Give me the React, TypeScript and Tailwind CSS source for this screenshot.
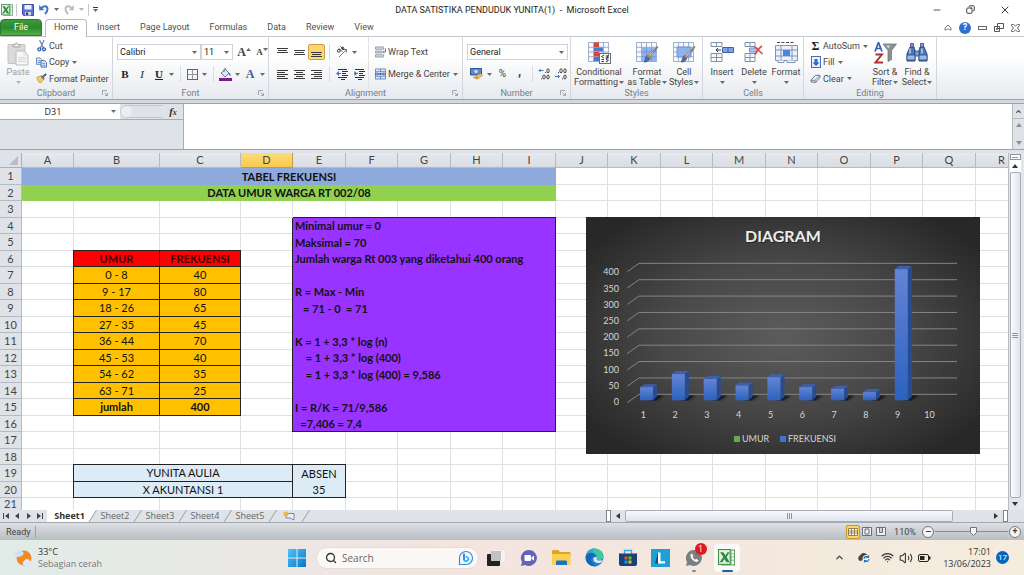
import React from "react";
import { ChevronUp, Search, Wifi, Volume2, X, Minus, Copy } from "lucide-react";

type P = { children?: React.ReactNode };

const cx = (...c: (string | false | undefined)[]) => c.filter(Boolean).join(" ");

/* ---------- small shared pieces ---------- */

const Caret = ({ dim }: { dim?: boolean }) => (
  <svg width="5" height="3" viewBox="0 0 5 3" className={cx("shrink-0", dim ? "text-[#b5b5b5]" : "text-[#6a6a6a]")}>
    <path d="M0 0h5L2.5 3z" fill="currentColor" />
  </svg>
);

const CaretSlot = ({ label, dim }: { label: string; dim?: boolean }) => (
  <button aria-label={label} className="flex h-4 w-[9px] items-center justify-center">
    <Caret dim={dim} />
  </button>
);

const Sep = () => (
  <span className="flex h-4 w-2 justify-center">
    <span className="w-px bg-[#d9dce0]" />
  </span>
);

const Launcher = () => (
  <svg width="6" height="6" viewBox="0 0 6 6" fill="none" stroke="#a0a6ae">
    <path d="M.5 5V.5H5M2.500 2.500l3 3M5.500 3v2.500H3" />
  </svg>
);

function Group({ name, width, launcher, children }: P & { name: string; width: string; launcher?: boolean }) {
  return (
    <section
      aria-label={name}
      className={cx("flex shrink-0 flex-col border-r border-[#d3d6db]", width)}
    >
      <div className="flex h-[51px]">{children}</div>
      <div className="flex h-3 items-center px-1">
        <span className="w-1.5" />
        <span className="flex-1 text-center text-[#777d88]">{name}</span>
        <span className="w-1.5">{launcher && <Launcher />}</span>
      </div>
    </section>
  );
}

function RowButton({ icon, label, caret }: { icon: React.ReactNode; label: string; caret?: boolean }) {
  return (
    <button className="flex items-center gap-[2px] whitespace-nowrap">
      <span className="flex w-[11px] justify-center">{icon}</span>
      {label}
      {caret && <span className="pl-px"><Caret /></span>}
    </button>
  );
}

function BigButton({ icon, lines, width, dim }: { icon: React.ReactNode; lines: string[]; width: string; dim?: boolean }) {
  const last = lines.length - 1;
  return (
    <button className={cx("flex flex-col items-center pt-[5px]", width, dim && "text-[#9d9d9d]")}>
      <span className="flex h-[25px] items-start justify-center">{icon}</span>
      <span className="h-[10px] whitespace-nowrap leading-[10px]">{lines[0]}</span>
      <span className="flex h-[10px] items-center gap-px whitespace-nowrap leading-[10px]">
        {last > 0 && lines[last]}
        <Caret dim={dim} />
      </span>
    </button>
  );
}

/* ---------- ribbon icons ---------- */

const ExcelIcon = ({ size }: { size: number }) => (
  <svg width={size} height={size} viewBox="0 0 16 16">
    <rect x="3.5" y="1" width="12" height="14" fill="#fff" stroke="#5d9a5f" />
    <path d="M10 4.500h5M10 7.500h5M10 10.500h5M12.500 1v14" stroke="#8dbd8c" />
    <rect x=".5" y=".5" width="11" height="14" fill="#dff0dc" stroke="#3f8f45" />
    <path d="M2 3h3l2 3 2-3h2L8 7.500l3 5H8L6 9.500 4 12.500H1.500L5 7.500z" fill="#2f8a43" />
  </svg>
);

const SaveIcon = () => (
  <svg width="12" height="12" viewBox="0 0 12 12">
    <path d="M.5.5h11v11h-10l-1-1z" fill="#5f72cc" stroke="#3f4fa0" />
    <path d="M2.500 1h7v4.500h-7z" fill="#e8eefb" />
    <path d="M3 8h6v3.500H3z" fill="#c9d3ee" />
    <path d="M4 8.500h2v2.500H4z" fill="#26357c" />
  </svg>
);

const UndoIcon = ({ flip }: { flip?: boolean }) => (
  <svg width="12" height="11" viewBox="0 0 12 11" fill="none" className={flip ? "-scale-x-100" : ""}>
    <path d="M3 4.500C5 1.500 9.500 1.500 9.500 5c0 2-1 3.500-2.500 5" stroke={flip ? "#b9bcc0" : "#3f77c8"} strokeWidth="2" />
    <path d="M1 1l.3 5.500L6.500 6z" fill={flip ? "#b9bcc0" : "#3f77c8"} />
  </svg>
);

const PasteIcon = () => (
  <svg width="22" height="24" viewBox="0 0 22 24">
    <rect x="1" y="2.500" width="17" height="19" rx="1" fill="#dadadc" stroke="#c2c2c4" />
    <path d="M6 5V2.500h2C8 .5 11 .5 11 2.500h2V5z" fill="#e6e6e8" stroke="#a5a5a8" />
    <path d="M9 9h8l4 4v10H9z" fill="#f6f6f8" stroke="#bcbcc0" />
    <path d="M17 9v4h4M11 15.500h8M11 17.500h8M11 19.500h8" fill="none" stroke="#d8d8dc" />
  </svg>
);

const CutIcon = () => (
  <svg width="10" height="12" viewBox="0 0 10 12" fill="none">
    <path d="M2.500 0l4 8M7 0L3.500 8" stroke="#6d87b5" strokeWidth="1.300" />
    <circle cx="2.300" cy="9.300" r="1.500" stroke="#2b5fb0" strokeWidth="1.300" />
    <circle cx="7" cy="9.300" r="1.500" stroke="#2b5fb0" strokeWidth="1.300" />
  </svg>
);

const CopyIcon = () => (
  <svg width="12" height="11" viewBox="0 0 12 11">
    <path d="M.5.5h4l2 2v5h-6z" fill="#dfeafa" stroke="#5b80b8" />
    <path d="M5.500 3.500h4l2 2v5h-6z" fill="#dfeafa" stroke="#3f68a8" />
    <path d="M2 3.500h3M2 5.500h3M7 6.500h3M7 8.500h3" stroke="#5b87c8" />
  </svg>
);

const PainterIcon = () => (
  <svg width="12" height="11" viewBox="0 0 12 11">
    <path d="M1 4l4-1 3 4-3 3.500C3 10 1 7 1 4z" fill="#f3cd6b" stroke="#b98d2c" strokeWidth=".7" />
    <path d="M5 2.500l3.500 4.500 1-1.500L6.500 2z" fill="#5d6470" />
    <path d="M8 3.500L11 .5" stroke="#3a4a78" strokeWidth="1.800" />
  </svg>
);

const Lines = ({ rows }: { rows: [number, number, number][] }) => (
  <svg width="11" height="11" viewBox="0 0 11 11" stroke="#3a3a3a">
    {rows.map(([x1, x2, y], i) => (
      <path key={i} d={`M${x1} ${y}.5H${x2}`} />
    ))}
  </svg>
);

const IndentIcon = ({ out }: { out?: boolean }) => (
  <svg width="12" height="11" viewBox="0 0 12 11">
    <path d="M2 .5h9M6 2.500h6M6 4.500h4M6 6.500h6M2 8.500h9M5 10.500h4" stroke="#333" />
    <path d={out ? "M0 4.500l3-2.500v5z" : "M4.500 4.500l-3-2.500v5z"} fill="#3c76c9" />
    <path d="M1 4.500h4" stroke="#3c76c9" />
  </svg>
);

const OrientationIcon = () => (
  <svg width="12" height="12" viewBox="0 0 12 12" fill="none" stroke="#333">
    <path d="M3 11L10.500 3.500M10.500 6.500v-3h-3" stroke="#777" />
    <circle cx="2.800" cy="4.800" r="1.400" />
    <path d="M3 2.500l3 3M4.500.5l3.500 3.500" />
    <circle cx="6.800" cy="2.300" r="1.100" />
  </svg>
);

const BordersIcon = () => (
  <svg width="11" height="11" viewBox="0 0 11 11" fill="none">
    <rect x=".5" y=".5" width="10" height="10" stroke="#666" />
    <path d="M5.500 1v9M1 5.500h9" stroke="#999" />
  </svg>
);

const BucketIcon = () => (
  <svg width="13" height="13" viewBox="0 0 13 13">
    <path d="M2 5l4.500-3.500L10 5 6 9z" fill="#dfe7f4" stroke="#56688c" strokeWidth=".9" />
    <path d="M5 4V1.500c0-1.500 2-1.500 2 0" fill="none" stroke="#56688c" strokeWidth=".8" />
    <path d="M10 4.500c1.500.5 2 2.500 1.300 4L9.500 6z" fill="#4b7ac6" />
    <path d="M0 10h13v3H0z" fill="#7a1a8c" />
  </svg>
);

const WrapIcon = () => (
  <svg width="12" height="12" viewBox="0 0 12 12">
    <path d="M.5.5h9v2.500h-9zM.5 5h7v2h-7zM.5 9h9v2.500h-9z" fill="#d6dde6" stroke="#7d8794" strokeWidth=".8" />
    <path d="M11.500 2v4H9M10 4.500L8.500 6 10 7.500" fill="none" stroke="#4672b8" />
  </svg>
);

const MergeIcon = () => (
  <svg width="12" height="12" viewBox="0 0 12 12">
    <path d="M.5.5h11v11H.5zM.5 3.500h11M.5 8.500h11M6 .5v3M6 8.500v3" fill="#dbe8f9" stroke="#587cae" strokeWidth=".9" />
    <path d="M0 6h3.500M8.500 6H12M2.500 4.500L4 6 2.500 7.500M9.500 4.500L8 6l1.500 1.500" fill="none" stroke="#1d4f9c" />
    <path d="M5 5h2v2H5z" fill="#243a60" />
  </svg>
);

const MoneyIcon = () => (
  <svg width="13" height="12" viewBox="0 0 13 12">
    <path d="M.5.5h11v6.500H.5z" fill="#5f86cf" stroke="#2f5399" />
    <circle cx="6" cy="3.500" r="1.700" fill="#cfdcf4" />
    <path d="M6 7.500l5-2 1.500 2-5 3.500zM3 9.500l4-1v2.500z" fill="#edc45a" stroke="#a9842b" strokeWidth=".6" />
  </svg>
);

const DecimalIcon = ({ less }: { less?: boolean }) => (
  <svg width="13" height="12" viewBox="0 0 13 12" fill="none" strokeWidth=".9">
    <g stroke="#333">
      <ellipse cx={less ? 6 : 10} cy="2.800" rx="1.200" ry="2" />
      <ellipse cx={less ? 10 : 6} cy={less ? 2.800 : 9} rx="1.200" ry="2" />
      <ellipse cx="10" cy="9" rx="1.200" ry="2" />
    </g>
    <path d={less ? "M3 4.500h1M7 10.800h1" : "M7 4.500h1M3 10.800h1"} stroke="#333" />
    <path d={less ? "M0 8.500h4.500M3 7l1.500 1.500L3 10" : "M5.500 2.500H1M2.500 1L1 2.500 2.500 4"} stroke="#2f68bd" />
  </svg>
);

const gridPath = "M.5.5h20v19H.5zM.5 5.300h20M.5 10h20M.5 14.700h20M5.500.5v19M10.500.5v19M15.500.5v19";

const Brush = () => (
  <>
    <path d="M21.500 5l-7 9.500-2-1.500z" fill="#c9ccd2" stroke="#6c7079" strokeWidth=".7" />
    <path d="M21.800 4.500l-3.800 5.300" stroke="#8a7a6a" strokeWidth="1.600" />
    <path d="M14.300 14.500c-.5 4-3.500 6-6.300 5.500 1.500-1.500.7-4.500 3.500-6.800z" fill="#4a6ca8" stroke="#2a4f8d" strokeWidth=".6" />
    <path d="M11.500 13.500l3 1.500" stroke="#d08b4a" strokeWidth="2" />
  </>
);

const ConditionalIcon = () => (
  <svg width="23" height="22" viewBox="0 0 23 22">
    <path d={gridPath} fill="#f6f9fe" stroke="#8b9dbd" strokeWidth=".8" />
    <path d="M6 .5h5V5H6zM6 10h5v4.500H6z" fill="#d8423a" />
    <path d="M6 5.500h9v4H6zM6 15h5v4H6z" fill="#4d79cc" />
    <rect x="11.500" y="11.500" width="11" height="10" fill="#fff" stroke="#6a6f78" />
    <path d="M16 13l-2.500 1.500L16 16M13.500 17.500H16M13.500 19.500H16M17.500 14h3.500M17.500 16H21M20.500 12.500l-2 5M18 17.500l2.500 1-2.500 1.500" fill="none" stroke="#222" strokeWidth=".9" />
  </svg>
);

const FormatTableIcon = () => (
  <svg width="23" height="22" viewBox="0 0 23 22">
    <path d={gridPath} fill="#f6f9fe" stroke="#8b9dbd" strokeWidth=".8" />
    <path d="M5.500 5.300h15v14.200h-15z" fill="#8fb2ea" />
    <path d="M5.500 10h15M5.500 14.700h15M10.500 5.300v14.200M15.500 5.300v14.200" stroke="#6d93d4" strokeWidth=".8" />
    <Brush />
  </svg>
);

const CellStylesIcon = () => (
  <svg width="23" height="22" viewBox="0 0 23 22">
    <path d={gridPath} fill="#f6f9fe" stroke="#8b9dbd" strokeWidth=".8" />
    <path d="M4 5h14v10H4z" fill="#8fb2ea" stroke="#6d93d4" />
    <Brush />
  </svg>
);

const InsertIcon = () => (
  <svg width="24" height="22" viewBox="0 0 24 22">
    <path d="M1 .5h11v4H1zM6.500.5v4M1 11.500h11v8H1zM6.500 11.500v8M1 15.500h11" fill="#f8fafd" stroke="#8390a8" />
    <path d="M12.500 5.500h11v5h-11zM18 5.500v5" fill="#7fa3e2" stroke="#3f63a9" />
    <path d="M11 8H6M8 6L6 8l2 2" fill="none" stroke="#333" />
  </svg>
);

const DeleteIcon = () => (
  <svg width="22" height="22" viewBox="0 0 22 22">
    <path d="M2 .5h10v4H2zM7 .5v4M2 11.500h10v8H2zM7 11.500v8M2 15.500h10" fill="#f8fafd" stroke="#8390a8" />
    <path d="M6.500 6h8v4h-8z" fill="#a9c2ee" stroke="#6d8fcc" />
    <path d="M11.500 4.500l8 7.500M19 4c-3 2-5 5-7 8.500" fill="none" stroke="#e0483a" strokeWidth="1.700" />
  </svg>
);

const FormatIcon = () => (
  <svg width="23" height="22" viewBox="0 0 23 22">
    <path d="M2 .5h18" stroke="#444" strokeDasharray="3 1.500" />
    <path d="M.5 3.500h22v15H.5zM.5 8h22M.5 14h22M6 3.500v17M17 3.500v17" fill="#eaf1fc" stroke="#7f94bb" />
    <path d="M8 8h7v6H8z" fill="#4f82d8" />
    <path d="M3 18.500v2h6v-2M12 18.500v2h8v-2" fill="#fff" stroke="#7f94bb" />
  </svg>
);

const FillIcon = () => (
  <svg width="10" height="12" viewBox="0 0 10 12">
    <rect x=".5" y=".5" width="9" height="11" fill="#e9f1fc" stroke="#4b6fae" />
    <path d="M3.500 3h3v3.500H8.500L5 10 1.500 6.500h2z" fill="#2d6bd0" />
  </svg>
);

const ClearIcon = () => (
  <svg width="12" height="10" viewBox="0 0 12 10">
    <path d="M1 6.500L6 1h4.500L11 3 6.500 8.500h-5z" fill="#eef2f8" stroke="#5a6880" />
    <path d="M1 6.500h4.500L10.500 1M5.500 6.500l1 2" fill="none" stroke="#5a6880" strokeWidth=".8" />
  </svg>
);

const SortIcon = () => (
  <svg width="23" height="22" viewBox="0 0 23 22">
    <path d="M9 2h13.500l-5 6.500v9l-3.500 2v-11z" fill="#8c8f94" stroke="#686b70" strokeWidth=".7" />
    <path d="M12 3.500h4l-1.500 3z" fill="#d8dadd" />
    <path d="M1 9.500L4.500.5 8 9.500M2.500 6.500h4" fill="none" stroke="#2f5fb0" strokeWidth="1.700" />
    <path d="M1.500 12.500H8L1.500 20.500H9" fill="none" stroke="#b03030" strokeWidth="1.900" />
  </svg>
);

const FindIcon = () => (
  <svg width="22" height="22" viewBox="0 0 22 22">
    <path d="M4 5h4l1 4v10H1v-7zM18 5h-4l-1 4v10h8v-7z" fill="#4f77ba" stroke="#2b4a84" />
    <path d="M4.500 1.500h3V5h-3zM14.500 1.500h3V5h-3zM9 9h4v5H9z" fill="#7f9fd4" stroke="#2b4a84" strokeWidth=".8" />
    <path d="M1 13h8v5H1zM13 13h8v5h-8z" fill="#9cb8e6" stroke="#2b4a84" strokeWidth=".8" />
    <path d="M4 6.500v5M16 6.500v5" stroke="#c5d5f0" strokeWidth="1.400" />
  </svg>
);

/* ---------- window top ---------- */

function TitleBar() {
  return (
    <header className="flex h-[19px] shrink-0 items-center">
      <div className="flex w-[150px] items-center pl-px">
        <ExcelIcon size={12} />
        <span className="ml-[3px] h-3 w-px bg-[#c5c8cc]" />
        <button aria-label="Save" className="ml-[5px]"><SaveIcon /></button>
        <button aria-label="Undo" className="ml-1 flex items-center gap-1"><UndoIcon /><Caret /></button>
        <button aria-label="Redo" className="ml-1 flex items-center gap-1"><UndoIcon flip /><Caret dim /></button>
        <span className="ml-1 h-3 w-px bg-[#c5c8cc]" />
        <button aria-label="Customize Quick Access Toolbar" className="ml-1 flex flex-col items-center gap-px">
          <span className="h-px w-[5px] bg-[#333]" />
          <Caret />
        </button>
      </div>
      <h1 className="flex-1 text-center text-[9px] text-[#1e1e1e]">
        DATA SATISTIKA PENDUDUK YUNITA(1)&nbsp; -&nbsp; Microsoft Excel
      </h1>
      <div className="flex w-[150px] items-center justify-end gap-6 pr-[13px] text-[#333]">
        <button aria-label="Minimize"><Minus size={10} strokeWidth={2} /></button>
        <button aria-label="Restore"><Copy size={9} strokeWidth={2.5} className="-scale-x-100" /></button>
        <button aria-label="Close"><X size={12} strokeWidth={2} /></button>
      </div>
    </header>
  );
}

function Tabs() {
  return (
    <nav className="flex h-[17px] shrink-0 text-[#4f4f4f]">
      <button className="w-[42px] rounded-t-sm border border-[#2c7a2f] bg-linear-to-b from-[#3f9a3f] via-[#2b8a2e] to-[#55ad45] pb-0.5 text-white">
        File
      </button>
      <button className="relative z-10 -mb-px ml-[3px] w-[42px] rounded-t-sm border border-b-0 border-[#b9bdc3] bg-white pb-[3px]">
        Home
      </button>
      {["Insert", "Page Layout", "Formulas", "Data", "Review", "View"].map((t) => (
        <button key={t} className="px-[10px] pb-0.5">{t}</button>
      ))}
      <div className="flex flex-1 items-center justify-end gap-[7px] pr-1">
        <button aria-label="Minimize the Ribbon">
          <svg width="8" height="7" viewBox="0 0 8 7" fill="none" stroke="#777"><path d="M1 4l3-3 3 3v2H5.500L4 4.500 2.500 6H1z" /></svg>
        </button>
        <button aria-label="Help" className="flex size-3 items-center justify-center rounded-full bg-[#2f6fd0] text-[9px] font-bold leading-none text-white">?</button>
        <button aria-label="Minimize workbook">
          <svg width="9" height="9" viewBox="0 0 9 9" fill="none" stroke="#666"><rect x=".5" y="3.500" width="8" height="3" /></svg>
        </button>
        <button aria-label="Restore workbook">
          <svg width="10" height="9" viewBox="0 0 10 9" fill="#fff" stroke="#555"><path d="M3.500.5h6v5h-6zM.5 3.500h5v5h-5zM2.500 5.500h1v1h-1z" /></svg>
        </button>
        <button aria-label="Close workbook">
          <svg width="9" height="8" viewBox="0 0 9 8" fill="none" stroke="#666"><path d="M.5.5h2L4.500 2l2-1.500h2v1L6.500 4l2 2.500v1h-2L4.500 6l-2 1.500h-2v-1L2.500 4l-2-2.500z" /></svg>
        </button>
      </div>
    </nav>
  );
}

function Combo({ label, value, width }: { label: string; value: string; width: string }) {
  return (
    <span className={cx("relative flex h-4 items-center border border-[#cfd2d7] bg-white", width)}>
      <select aria-label={label} className="w-full appearance-none bg-transparent pl-[2px] text-[9px] leading-[14px] text-[#222] outline-none">
        <option>{value}</option>
      </select>
      <span className="pointer-events-none absolute right-[3px]"><Caret /></span>
    </span>
  );
}

function Slot({ label, width = "w-4", active, children }: P & { label: string; width?: string; active?: boolean }) {
  return (
    <button
      aria-label={label}
      className={cx(
        "flex h-4 items-center justify-center",
        width,
        active && "rounded-xs border border-[#c9a04a] bg-linear-to-b from-[#fbd36c] to-[#fde06d]"
      )}
    >
      {children}
    </button>
  );
}

function Ribbon() {
  return (
    <div className="flex h-16 shrink-0 border-y border-t-[#c3c7cd] border-b-[#9da2a9] bg-linear-to-b from-white from-30% to-[#e6e9ee] text-[#444]">
      <Group name="Clipboard" width="w-[113px]" launcher>
        <BigButton icon={<PasteIcon />} lines={["Paste"]} width="w-9" dim />
        <div className="grid grid-rows-3 pt-px">
          <RowButton icon={<CutIcon />} label="Cut" />
          <RowButton icon={<CopyIcon />} label="Copy" caret />
          <RowButton icon={<PainterIcon />} label="Format Painter" />
        </div>
      </Group>

      <Group name="Font" width="w-[156px]" launcher>
        <div className="flex flex-col gap-[6px] pl-1 pt-[7px]">
          <div className="flex">
            <Combo label="Font" value="Calibri" width="w-[84px]" />
            <Combo label="Font size" value="11" width="w-8" />
            <span className="w-[3px]" />
            <Slot label="Increase font size"><span className="font-['Liberation_Serif',serif] text-[12px] font-bold">A</span><span className="-mt-1.5 rotate-180"><Caret /></span></Slot>
            <span className="w-[2px]" />
            <Slot label="Decrease font size"><span className="font-['Liberation_Serif',serif] text-[9px] font-bold">A</span><span className="-mt-1.5"><Caret /></span></Slot>
          </div>
          <div className="flex font-['Liberation_Serif',serif] text-[11px] leading-none text-[#222]">
            <Slot label="Bold"><b>B</b></Slot>
            <Slot label="Italic" width="w-[18px]"><i>I</i></Slot>
            <Slot label="Underline"><u className="font-bold">U</u></Slot>
            <CaretSlot label="Underline options" />
            <Sep />
            <Slot label="Borders"><BordersIcon /></Slot>
            <CaretSlot label="Border options" />
            <Sep />
            <Slot label="Fill color"><BucketIcon /></Slot>
            <CaretSlot label="Fill color options" />
            <Slot label="Font color"><span className="text-[12px] font-bold text-[#35599c]">A</span></Slot>
            <CaretSlot label="Font color options" />
          </div>
        </div>
      </Group>

      <Group name="Alignment" width="w-[194px]" launcher>
        <div className="flex w-[100px] flex-col gap-[6px] border-r border-[#e0e2e6] pl-[5px] pt-[7px]">
          <div className="flex">
            <Slot label="Top align" width="w-[17px]"><Lines rows={[[0, 11, 1], [1, 10, 3], [0, 11, 5]]} /></Slot>
            <Slot label="Middle align" width="w-[17px]"><Lines rows={[[0, 11, 3], [1, 10, 5], [0, 11, 7]]} /></Slot>
            <Slot label="Bottom align" width="w-[17px]" active><Lines rows={[[0, 11, 5], [1, 10, 7], [0, 11, 9]]} /></Slot>
            <Sep />
            <Slot label="Orientation" width="w-[17px]"><OrientationIcon /></Slot>
            <CaretSlot label="Orientation options" />
          </div>
          <div className="flex">
            <Slot label="Align left" width="w-[17px]"><Lines rows={[[0, 11, 1], [0, 8, 3], [0, 11, 5], [0, 8, 7], [0, 11, 9]]} /></Slot>
            <Slot label="Center" width="w-[17px]"><Lines rows={[[0, 11, 1], [2, 9, 3], [0, 11, 5], [2, 9, 7], [0, 11, 9]]} /></Slot>
            <Slot label="Align right" width="w-[17px]"><Lines rows={[[0, 11, 1], [3, 11, 3], [0, 11, 5], [3, 11, 7], [0, 11, 9]]} /></Slot>
            <Sep />
            <Slot label="Decrease indent" width="w-[17px]"><IndentIcon out /></Slot>
            <Slot label="Increase indent" width="w-[17px]"><IndentIcon /></Slot>
          </div>
        </div>
        <div className="flex flex-col items-start gap-[6px] pl-[6px] pt-[7px]">
          <div className="flex h-4"><RowButton icon={<WrapIcon />} label="Wrap Text" /></div>
          <div className="flex h-4"><RowButton icon={<MergeIcon />} label="Merge & Center" caret /></div>
        </div>
      </Group>

      <Group name="Number" width="w-[108px]" launcher>
        <div className="flex flex-col gap-[6px] pl-1 pt-[7px]">
          <Combo label="Number format" value="General" width="w-[101px]" />
          <div className="flex text-[10px] font-bold">
            <Slot label="Accounting format" width="w-[18px]"><MoneyIcon /></Slot>
            <CaretSlot label="Accounting format options" />
            <Slot label="Percent style" width="w-[17px]"><span className="font-normal">%</span></Slot>
            <Slot label="Comma style" width="w-[17px]"><span className="pb-1 text-[13px] leading-[6px]">,</span></Slot>
            <Sep />
            <Slot label="Increase decimal" width="w-[17px]"><DecimalIcon /></Slot>
            <Slot label="Decrease decimal" width="w-[17px]"><DecimalIcon less /></Slot>
          </div>
        </div>
      </Group>

      <Group name="Styles" width="w-[132px]">
        <BigButton icon={<ConditionalIcon />} lines={["Conditional", "Formatting"]} width="w-[56px]" />
        <BigButton icon={<FormatTableIcon />} lines={["Format", "as Table"]} width="w-[40px]" />
        <BigButton icon={<CellStylesIcon />} lines={["Cell", "Styles"]} width="w-[34px]" />
      </Group>

      <Group name="Cells" width="w-[101px]">
        <span className="w-[3px]" />
        <BigButton icon={<InsertIcon />} lines={["Insert"]} width="w-8" />
        <BigButton icon={<DeleteIcon />} lines={["Delete"]} width="w-8" />
        <BigButton icon={<FormatIcon />} lines={["Format"]} width="w-8" />
      </Group>

      <Group name="Editing" width="w-[133px]">
        <div className="grid w-[64px] grid-rows-3 pl-[6px] pt-px">
          <RowButton icon={<b className="font-['Liberation_Serif',serif] text-[12px] leading-none text-[#222]">Σ</b>} label="AutoSum" caret />
          <RowButton icon={<FillIcon />} label="Fill" caret />
          <RowButton icon={<ClearIcon />} label="Clear" caret />
        </div>
        <BigButton icon={<SortIcon />} lines={["Sort &", "Filter"]} width="w-[34px]" />
        <BigButton icon={<FindIcon />} lines={["Find &", "Select"]} width="w-[30px]" />
      </Group>
    </div>
  );
}

const ScrollArrow = ({ down, className = "text-[#8b9098]" }: { down?: boolean; className?: string }) => (
  <svg width="6" height="4" viewBox="0 0 6 4" className={className}>
    <path d={down ? "M0 0h6L3 4z" : "M0 4h6L3 0z"} fill="currentColor" />
  </svg>
);

function FormulaBar() {
  return (
    <div className="flex shrink-0 flex-col bg-[#d5d9de] pt-[3px]">
      <div className="flex h-[47px] border-y border-[#9ea3aa] bg-[#dfe3e8]">
        <div className="flex w-[184px] shrink-0 flex-col border-r border-[#a9adb3]">
          <div className="flex h-4 border-b border-[#a9adb3]">
            <input aria-label="Name Box" defaultValue="D31" className="w-[106px] bg-white text-center font-['Open_Sans',sans-serif] text-[9px] text-[#222] outline-none" />
            <button aria-label="Name list" className="flex w-[14px] items-center justify-center bg-white"><Caret /></button>
            <span className="mt-px h-[13px] flex-1 rounded-l-full border border-r-0 border-[#c4c8ce]">
              <span className="block size-[11px] rounded-full bg-[#eceef1]" />
            </span>
            <button aria-label="Insert Function" className="w-5 font-['Liberation_Serif',serif] text-[11px] font-bold italic leading-none text-[#333]">
              f<span className="text-[8px]">x</span>
            </button>
          </div>
        </div>
        <input aria-label="Formula" className="min-w-0 flex-1 bg-white outline-none" />
        <div className="flex w-3 shrink-0 flex-col items-center border-l border-[#b7bbc1]">
          <button aria-label="Collapse formula bar" className="flex h-[15px] w-full items-center justify-center border-b border-[#b7bbc1]">
            <ChevronUp size={7} strokeWidth={4} className="text-[#444]" />
          </button>
          <div className="flex w-full flex-1 flex-col items-center justify-between py-1">
            <ScrollArrow />
            <ScrollArrow down />
          </div>
        </div>
      </div>
    </div>
  );
}

/* ---------- worksheet ---------- */

const columns: [string, string][] = [
  ["A", "w-[52px]"], ["B", "w-[86px]"], ["C", "w-[81px]"], ["D", "w-[52px]"], ["E", "w-[53px]"],
  ["F", "w-[52px]"], ["G", "w-[53px]"], ["H", "w-[52px]"], ["I", "w-[53px]"], ["J", "w-[52px]"],
  ["K", "w-[53px]"], ["L", "w-[52px]"], ["M", "w-[53px]"], ["N", "w-[52px]"], ["O", "w-[53px]"],
  ["P", "w-[52px]"], ["Q", "w-[53px]"], ["R", "w-[52px]"],
];

const ages: Record<number, [string, string]> = {
  7: ["0 - 8", "40"], 8: ["9 - 17", "80"], 9: ["18 - 26", "65"], 10: ["27 - 35", "45"], 11: ["36 - 44", "70"],
  12: ["45 - 53", "40"], 13: ["54 - 62", "35"], 14: ["63 - 71", "25"], 15: ["jumlah", "400"],
};

const notes: Record<number, string> = {
  4: "Minimal umur = 0",
  5: "Maksimal = 70",
  6: "Jumlah warga Rt 003 yang diketahui 400 orang",
  8: "R = Max - Min",
  9: "   = 71 - 0  = 71",
  11: "K = 1 + 3,3 * log (n)",
  12: "    = 1 + 3,3 * log (400)",
  13: "    = 1 + 3,3 * log (400) = 9,586",
  15: "I = R/K = 71/9,586",
  16: "  =7,406 = 7,4",
};

const plain = "border-b border-r border-[#dcdfe4] p-0";
const boxed =
  "border-b border-r border-[#222] p-0 text-center shadow-[-1px_0_0_#222,0_-1px_0_#222,-1px_-1px_0_#222]";

const blanks = (from: number, to: number) =>
  Array.from({ length: to - from + 1 }, (_, i) => <td key={from + i} className={plain} />);

function rowCells(r: number) {
  if (r === 1) return [<td key="t" colSpan={9} className="bg-[#8ea9db] p-0 text-center font-bold">TABEL FREKUENSI</td>, ...blanks(10, 18)];
  if (r === 2) return [<td key="t" colSpan={9} className="bg-[#92d050] p-0 text-center font-bold">DATA UMUR WARGA RT 002/08</td>, ...blanks(10, 18)];
  if (r === 19)
    return [
      ...blanks(1, 1),
      <td key="n" colSpan={3} className={cx(boxed, "bg-[#ddebf7]")}>YUNITA AULIA</td>,
      <td key="a" className="border-r border-[#222] bg-[#ddebf7] p-0 text-center shadow-[0_-1px_0_#222]">ABSEN</td>,
      ...blanks(6, 18),
    ];
  if (r === 20)
    return [
      ...blanks(1, 1),
      <td key="n" colSpan={3} className={cx(boxed, "bg-[#ddebf7]")}>X AKUNTANSI 1</td>,
      <td key="a" className="border-b border-r border-[#222] bg-[#ddebf7] p-0 text-center">35</td>,
      ...blanks(6, 18),
    ];

  const out: React.ReactNode[] = [...blanks(1, 1)];
  if (r === 6) {
    out.push(
      <td key="b" className={cx(boxed, "bg-[#fe0000] font-bold text-[#400]")}>UMUR</td>,
      <td key="c" className={cx(boxed, "bg-[#fe0000] font-bold text-[#400]")}>FREKUENSI</td>
    );
  } else if (ages[r]) {
    const bold = r === 15 && "font-bold";
    out.push(
      <td key="b" className={cx(boxed, "bg-[#ffc000]", bold)}>{ages[r][0]}</td>,
      <td key="c" className={cx(boxed, "bg-[#ffc000]", bold)}>{ages[r][1]}</td>
    );
  } else out.push(...blanks(2, 3));
  out.push(...blanks(4, 4));
  if (r >= 4 && r <= 16) {
    out.push(
      <td
        key="note"
        colSpan={5}
        className={cx(
          "whitespace-pre border-r border-[#222] bg-[#9933ff] py-0 pl-[2px] pr-0 font-bold",
          r === 4 ? "shadow-[-1px_0_0_#222,0_-1px_0_#222]" : "shadow-[-1px_0_0_#222]",
          r === 16 && "border-b"
        )}
      >
        {notes[r]}
      </td>
    );
  } else out.push(...blanks(5, 9));
  out.push(...blanks(10, 18));
  return out;
}

function Sheet() {
  return (
    <table className="w-[1028px] table-fixed border-separate border-spacing-0 font-['Lato','Liberation_Sans',sans-serif] text-[11px] leading-[14px] text-[#111]">
      <colgroup>
        <col className="w-[22px]" />
        {columns.map(([c, w]) => <col key={c} className={w} />)}
      </colgroup>
      <thead>
        <tr className="h-[15px]">
          <th className="border-b border-r border-[#aab0b8] bg-[#dfe3e8] p-0">
            <svg width="21" height="14" viewBox="0 0 21 14"><path d="M18 3v9H9z" fill="#b9bec6" /></svg>
          </th>
          {columns.map(([c]) => (
            <th
              key={c}
              scope="col"
              className={cx(
                "border-b border-r p-0 font-normal text-[#444]",
                c === "D"
                  ? "border-[#c79a3a] bg-linear-to-b from-[#fbdc7c] to-[#fbc94a]"
                  : "border-[#b4bac2] bg-linear-to-b from-[#e6e9ed] to-[#d9dde3]"
              )}
            >
              {c}
            </th>
          ))}
        </tr>
      </thead>
      <tbody>
        {Array.from({ length: 21 }, (_, i) => (
          <tr key={i} className="odd:h-[17px] even:h-4 last:align-top last:leading-3">
            <th scope="row" className="border-b border-r border-[#b4bac2] bg-[#dfe3e8] p-0 font-normal text-[#444]">{i + 1}</th>
            {rowCells(i + 1)}
          </tr>
        ))}
      </tbody>
    </table>
  );
}

function Chart() {
  const values = [40, 80, 65, 45, 70, 40, 35, 25, 400];
  return (
    <svg
      role="img"
      aria-label="Diagram"
      width="394"
      height="237"
      viewBox="0 0 394 237"
      className="absolute left-[586px] top-[64px] font-['Lato','Liberation_Sans',sans-serif]"
      fill="#d6d6d6"
      fontSize="9"
    >
      <defs>
        <radialGradient id="wall" cx=".5" cy=".5" r=".62">
          <stop offset="0" stopColor="#5c5c5c" />
          <stop offset=".5" stopColor="#484848" />
          <stop offset="1" stopColor="#282828" />
        </radialGradient>
        <linearGradient id="bar" x1="0" y1="0" x2="0" y2="1">
          <stop offset="0" stopColor="#6384d4" />
          <stop offset="1" stopColor="#2d62bd" />
        </linearGradient>
        <filter id="soft"><feGaussianBlur stdDeviation="1.300" /></filter>
      </defs>
      <rect width="394" height="237" fill="url(#wall)" />
      <text x="198" y="26" textAnchor="middle" fontSize="16" fontWeight="700" fill="#111" opacity=".6">DIAGRAM</text>
      <text x="197" y="25" textAnchor="middle" fontSize="16" fontWeight="700" fill="#ececec">DIAGRAM</text>
      {Array.from({ length: 9 }, (_, i) => {
        const y = 177.300 - i * 16.370;
        return (
          <g key={i}>
            <path d={`M41.300 ${y + 8.300}L53 ${y}H371`} fill="none" stroke="#858585" />
            <text x="33" y={188 - i * 16.200} textAnchor="end">{i * 50}</text>
          </g>
        );
      })}
      {values.map((v, i) => {
        const x = 54 + i * 31.850;
        const top = 183.300 - v * 0.328;
        return (
          <g key={i}>
            <path d={`M${x + 8} 183.500h8l8-5h-10z`} fill="#000" opacity=".75" filter="url(#soft)" />
            <path d={`M${x + 13} ${top}l4-3V180l-4 3.300z`} fill="#264c93" />
            <path d={`M${x} ${top}l4-3h13l-4 3z`} fill="#3d60ad" />
            <rect x={x} y={top} width="13" height={183.300 - top} fill="url(#bar)" />
          </g>
        );
      })}
      {Array.from({ length: 10 }, (_, i) => (
        <text key={i} x={57.300 + i * 31.800} y="201" textAnchor="middle">{i + 1}</text>
      ))}
      <rect x="148" y="219" width="6" height="6" fill="#6aa84f" />
      <text x="156" y="225">UMUR</text>
      <rect x="194" y="219" width="6" height="6" fill="#4472c4" />
      <text x="202" y="225">FREKUENSI</text>
    </svg>
  );
}

function VerticalScroll() {
  return (
    <div className="flex w-4 shrink-0 flex-col items-center border-l border-[#b7bbc1] bg-[#e3e6eb] pr-[3px]">
      <span className="mt-px flex h-[6px] w-[11px] items-center justify-center border border-[#8f959d] bg-white">
        <span className="h-px w-1.5 bg-[#8f959d]" />
      </span>
      <button aria-label="Scroll up" className="flex h-3 w-[11px] items-center justify-center bg-white"><ScrollArrow className="text-[#333]" /></button>
      <div className="flex w-[11px] flex-1 flex-col items-center justify-center gap-px rounded-xs border border-[#a9afb8] bg-linear-to-r from-[#fafbfc] to-[#dfe3ea]">
        <span className="h-px w-1.5 bg-[#8f959d]" />
        <span className="h-px w-1.5 bg-[#8f959d]" />
        <span className="h-px w-1.5 bg-[#8f959d]" />
      </div>
      <button aria-label="Scroll down" className="flex h-3 items-center"><ScrollArrow down className="text-[#333]" /></button>
    </div>
  );
}

const NavArrow = ({ label, d }: { label: string; d: string }) => (
  <button aria-label={label} className="flex w-[11px] justify-center">
    <svg width="7" height="6" viewBox="0 0 7 6"><path d={d} fill="#444" /></svg>
  </button>
);

const Slant = ({ white }: { white?: boolean }) => (
  <svg width="9" height="12" viewBox="0 0 9 12" className="shrink-0">
    {white && <path d="M0 0h8L1 12H0z" fill="#fff" />}
    <path d="M8.500 0L1 12" stroke="#9aa0a8" fill="none" />
  </svg>
);

function SheetTabs() {
  return (
    <div className="flex h-[13px] shrink-0 items-stretch border-b border-[#a4a9b0] bg-[#dfe3e8] font-['Open_Sans','Noto_Sans',sans-serif] text-[9px] leading-3 text-[#666]">
      <div className="flex w-[47px] shrink-0 items-center pl-px">
        <NavArrow label="First sheet" d="M0 0h1v6H0zM6 0v6L2 3z" />
        <NavArrow label="Previous sheet" d="M5 0v6L1 3z" />
        <NavArrow label="Next sheet" d="M2 0v6l4-3z" />
        <NavArrow label="Last sheet" d="M1 0v6l4-3zM6 0h1v6H6z" />
      </div>
      <button className="w-[41px] bg-white pl-[4px] font-bold text-[#333]">Sheet1</button>
      <Slant white />
      {["Sheet2", "Sheet3", "Sheet4", "Sheet5"].map((s) => (
        <React.Fragment key={s}>
          <button className="w-9">{s}</button>
          <Slant />
        </React.Fragment>
      ))}
      <button aria-label="Insert Worksheet" className="flex w-6 items-center justify-center">
        <svg width="12" height="10" viewBox="0 0 12 10"><path d="M3 2.500h8v6H9L8 7H3z" fill="#eef3fb" stroke="#6b86b8" /><circle cx="3" cy="3" r="2.500" fill="#f0b445" /></svg>
      </button>
      <Slant />
      <span className="flex-1" />
      <div className="flex w-[418px] shrink-0 items-stretch">
        <span className="w-[5px] border border-[#7f858d] bg-white" />
        <button aria-label="Scroll left" className="flex w-[14px] items-center justify-center">
          <svg width="4" height="6" viewBox="0 0 4 6"><path d="M4 0v6L0 3z" fill="#333" /></svg>
        </button>
        <div className="flex w-[328px] items-center justify-center gap-px rounded-xs border border-[#a9afb8] bg-linear-to-b from-[#f8f9fb] to-[#dfe4ee]">
          <span className="h-1.5 w-px bg-[#8f959d]" />
          <span className="h-1.5 w-px bg-[#8f959d]" />
          <span className="h-1.5 w-px bg-[#8f959d]" />
        </div>
        <span className="flex-1" />
        <button aria-label="Scroll right" className="flex w-[9px] items-center">
          <svg width="4" height="6" viewBox="0 0 4 6"><path d="M0 0v6l4-3z" fill="#333" /></svg>
        </button>
        <span className="mr-4 w-[5px] border border-[#7f858d] bg-white" />
      </div>
    </div>
  );
}

function StatusBar() {
  return (
    <footer className="flex h-[17px] shrink-0 items-center bg-linear-to-b from-[#dde0e5] to-[#b9bec4] text-[#444]">
      <span className="w-9 border-r border-[#9da2a9] pl-1.5">Ready</span>
      <span className="flex-1" />
      <button aria-label="Normal view" className="flex h-[14px] w-[14px] items-center justify-center rounded-xs border border-[#c9962c] bg-[#fcd768]">
        <svg width="10" height="8" viewBox="0 0 10 8"><path d="M.5.5h9v7h-9zM.5 3h9M.5 5h9M3.500.5v7M6.500.5v7" fill="#fff" stroke="#7d6a35" strokeWidth=".8" /></svg>
      </button>
      <button aria-label="Page layout view" className="flex w-[14px] justify-center">
        <svg width="10" height="9" viewBox="0 0 10 9"><path d="M.5.5h9v8h-9zM3 2h4v5H3z" fill="#eef0f3" stroke="#6a7078" /></svg>
      </button>
      <button aria-label="Page break preview" className="flex w-[14px] justify-center">
        <svg width="10" height="9" viewBox="0 0 10 9"><path d="M.5.5h9v8h-9zM3.500.5v5h3v-5" fill="#eef0f3" stroke="#6a7078" /></svg>
      </button>
      <span className="w-[34px] text-center">110%</span>
      <div className="flex items-center gap-px pr-[3px]">
        <button aria-label="Zoom out" className="flex size-3 items-center justify-center rounded-full border border-[#777] bg-[#f3f4f6]"><Minus size={7} strokeWidth={4} /></button>
        <label className="relative flex h-3 w-[73px] items-center">
          <span className="h-px w-full bg-[#8a8f96]" />
          <input type="range" aria-label="Zoom" defaultValue={50} className="absolute inset-0 w-full opacity-0" />
          <svg width="7" height="9" viewBox="0 0 7 9" className="pointer-events-none absolute left-[35px]"><path d="M.5.5h6v5l-3 3-3-3z" fill="#f6f7f9" stroke="#70757d" /></svg>
        </label>
        <button aria-label="Zoom in" className="flex size-3 items-center justify-center rounded-full border border-[#777] bg-[#f3f4f6] text-[9px] font-bold leading-none">+</button>
      </div>
    </footer>
  );
}

/* ---------- taskbar ---------- */

function Taskbar() {
  return (
    <div className="flex h-[35px] shrink-0 items-center bg-linear-to-r from-[#e0ece9] via-[#f3e4df] via-45% to-[#f5ecdd] font-['Open_Sans','Noto_Sans',sans-serif] text-[#333]">
      <div className="flex flex-1 items-center gap-[5px] pl-[14px]">
        <svg width="19" height="18" viewBox="0 0 19 18">
          <circle cx="10" cy="9" r="7.500" fill="#f08a24" />
          <path d="M2 8a3 3 0 010-5 4 4 0 016-.5c2 .5 2 3 .5 4C7 8 4 8 2 8z" fill="#cfe0f8" />
          <path d="M10 16.500a2.500 2.500 0 010-4.500 3.300 3.300 0 016 0c3 0 3 4.500 0 4.500z" fill="#dce9fb" />
        </svg>
        <div className="text-[9px] leading-[12px]">
          <div>33°C</div>
          <div className="text-[#777]">Sebagian cerah</div>
        </div>
      </div>

      <div className="ml-2 flex items-center">
        <button aria-label="Start" className="mr-[10px]">
          <svg width="18" height="18" viewBox="0 0 18 18">
            <defs><linearGradient id="win" x1="0" y1="0" x2="1" y2="1"><stop offset="0" stopColor="#4cc5f6" /><stop offset="1" stopColor="#0a74cf" /></linearGradient></defs>
            <path d="M0 0h8.500v8.500H0zM9.500 0H18v8.500H9.500zM0 9.500h8.500V18H0zM9.500 9.500H18V18H9.500z" fill="url(#win)" />
          </svg>
        </button>
        <label className="flex h-[22px] w-[163px] items-center rounded-full border border-[#e4dcd8] bg-[#fcf8f6] pl-2 pr-1">
          <Search size={12} strokeWidth={2.600} />
          <input aria-label="Search" placeholder="Search" className="ml-[5px] w-0 flex-1 bg-transparent text-[10px] outline-none placeholder:text-[#666]" />
          <svg width="16" height="16" viewBox="0 0 16 16" fill="none">
            <path d="M1.500 14.500V8A6.500 6.500 0 118 14.500z" stroke="#3a86e0" strokeWidth="1.200" fill="#f4fbff" />
            <path d="M6 3.500v7" stroke="#2f6fe0" strokeWidth="1.700" />
            <path d="M6 10.500c3 1.500 5-.5 4.500-2C10 7 8.500 6.500 7.500 6.500" stroke="#1fb0e8" strokeWidth="1.700" />
          </svg>
        </label>
        <div className="grid auto-cols-[33px] grid-flow-col items-center justify-items-center">
          <button aria-label="Task view">
            <svg width="18" height="16" viewBox="0 0 18 16"><rect x="5" width="13" height="12" rx="1" fill="#f4f2f0" /><rect y="4" width="13" height="12" rx="1" fill="#222" /><rect x="4" y="1" width="10" height="10" fill="#c4c2c0" /></svg>
          </button>
          <button aria-label="Chat">
            <svg width="18" height="18" viewBox="0 0 18 18"><path d="M9 1a8 8 0 11-4 15l-4 1 1-4A8 8 0 019 1z" fill="#6264b8" /><rect x="4.500" y="6" width="6.500" height="6" rx="1" fill="#fff" /><path d="M11.500 8.500L14 6.500v5l-2.500-1.500z" fill="#fff" /></svg>
          </button>
          <button aria-label="File Explorer">
            <svg width="19" height="17" viewBox="0 0 19 17"><path d="M0 2a1 1 0 011-1h5l2 2h9.500a1 1 0 011 1v3H0z" fill="#e2a226" /><path d="M0 5h18.500v10a1 1 0 01-1 1H1a1 1 0 01-1-1z" fill="#fbd04f" /><path d="M4 16v-3.500a1 1 0 011-1h9a1 1 0 011 1V16z" fill="#1a73c8" /></svg>
          </button>
          <button aria-label="Edge">
            <svg width="19" height="19" viewBox="0 0 19 19">
              <circle cx="9.500" cy="9.500" r="9" fill="#1b84d8" />
              <path d="M.8 7.500C2 3 5.500.5 9.500.5c5 0 9 3.500 9 7.500 0 3-2.500 4.500-5 4.500-1.500 0-2.500-.7-2-1.500C13 8 10 4.800 7 5 4 5 1.500 6 .8 7.500z" fill="#3fc7a0" />
              <path d="M.6 8.500C1.500 2.500 6 .5 9.500.5c-3 1-1 3 .5 4.500C7 3.800 3 5 .6 8.500z" fill="#2ba8dc" />
              <path d="M.8 8C3 3.500 10 3.500 11.500 9 8 7 5.500 10 6.500 13c1 3 3.500 4.500 5.500 5C5 19.500-.5 14 .8 8z" fill="#1566b8" />
              <path d="M11.300 8.800c-2.500.2-3.500 2-2.500 4 1.200 2.200 5 3 8 1.200l.7-2c-1.500.7-3 .9-4.500.6-1.500-.3-2-1-1.500-1.800.3-.7.200-1.300-.2-2z" fill="#f3ece8" />
            </svg>
          </button>
          <button aria-label="Microsoft Store">
            <svg width="18" height="18" viewBox="0 0 18 18"><path d="M5.500 5V1.500h7V5" fill="none" stroke="#35b0e0" strokeWidth="1.300" /><path d="M0 4.500h18V15a2 2 0 01-2 2H2a2 2 0 01-2-2z" fill="#15437a" /><path d="M5.500 7.500h3v3h-3z" fill="#f25022" /><path d="M9.500 7.500h3v3h-3z" fill="#7fba00" /><path d="M5.500 11.500h3v3h-3z" fill="#00a4ef" /><path d="M9.500 11.500h3v3h-3z" fill="#ffb900" /></svg>
          </button>
          <button aria-label="Lenovo Vantage">
            <svg width="19" height="18" viewBox="0 0 19 18"><path d="M0 0h19v18H0z" fill="#1f9fd4" /><path d="M7 3.500L4 14.500h3z" fill="#154a6e" /><path d="M7 3.500h2.500v8.700H14v2.300H7z" fill="#fff" /></svg>
          </button>
          <button aria-label="WhatsApp" className="relative h-7 w-[18px]">
            <svg width="18" height="18" viewBox="0 0 18 18" className="mt-px"><path d="M9 1a8 8 0 11-4 15l-4 1 1-4A8 8 0 019 1z" fill="#7c7f82" /><path d="M5.500 5.500l1.500-1 1.500 2.500-1 1c.7 1.300 1.500 2 2.700 2.700l1-1 2.300 1.500-1 1.600C9.500 13.500 5 9.500 5.500 5.500z" fill="#fff" /></svg>
            <span className="absolute -right-1 -top-px flex size-3 items-center justify-center rounded-full bg-[#e0191d] text-[9px] leading-none text-white">1</span>
            <span className="absolute bottom-0 left-[7px] h-[2px] w-1 rounded-full bg-[#8a8a8a]" />
          </button>
          <button aria-label="Excel" className="relative flex h-7 w-[26px] items-center justify-center rounded-sm bg-[#fcf9f6]">
            <ExcelIcon size={17} />
            <span className="absolute bottom-0 left-2 h-[2px] w-[11px] rounded-full bg-[#0b68b8]" />
          </button>
        </div>
      </div>

      <div className="flex flex-1 items-center justify-end pr-[15px]">
        <ChevronUp size={11} strokeWidth={2.500} />
        <svg width="14" height="11" viewBox="0 0 14 11" className="ml-3">
          <path d="M3 9a3 3 0 010-5.500 4 4 0 017-.8A3.500 3.500 0 0113 6z" fill="#444" />
          <circle cx="9.500" cy="7" r="4" fill="#f5ecdd" />
          <path d="M7 7a2.500 2.500 0 014.500-1.500M12 7a2.500 2.500 0 01-4.500 1.500M11.500 3.500v2h-2M7.500 10.500v-2h2" fill="none" stroke="#1474c8" strokeWidth="1.100" />
        </svg>
        <Wifi size={13} strokeWidth={2.200} className="ml-[10px]" />
        <Volume2 size={14} strokeWidth={1.800} className="ml-[5px]" />
        <svg width="13" height="8" viewBox="0 0 13 8" className="ml-[5px]">
          <rect x=".5" y=".5" width="10" height="7" rx="1.500" fill="none" stroke="#222" />
          <path d="M2 2h4.500v4H2zM11 2.500h1.500v3H11z" fill="#222" />
        </svg>
        <div className="ml-3 mr-[5px] text-right text-[9px] leading-3">
          <div>17:01</div>
          <div>13/06/2023</div>
        </div>
        <div className="flex size-[13px] items-center justify-center rounded-full bg-[#0067c0] font-['Roboto',sans-serif] text-[8px] leading-none text-white">17</div>
      </div>
    </div>
  );
}

export default function App() {
  return (
    <div className="flex h-screen min-h-[420px] flex-col overflow-hidden bg-white font-['Roboto','Open_Sans',sans-serif] text-[9px] leading-3">
      <TitleBar />
      <Tabs />
      <Ribbon />
      <FormulaBar />
      <main className="flex min-h-0 flex-1 flex-col bg-[#dfe3e8] pt-[3px]">
        <div className="flex min-h-0 flex-1">
          <div className="relative min-w-0 flex-1 overflow-hidden bg-white">
            <Sheet />
            <Chart />
          </div>
          <VerticalScroll />
        </div>
      </main>
      <SheetTabs />
      <StatusBar />
      <Taskbar />
    </div>
  );
}
